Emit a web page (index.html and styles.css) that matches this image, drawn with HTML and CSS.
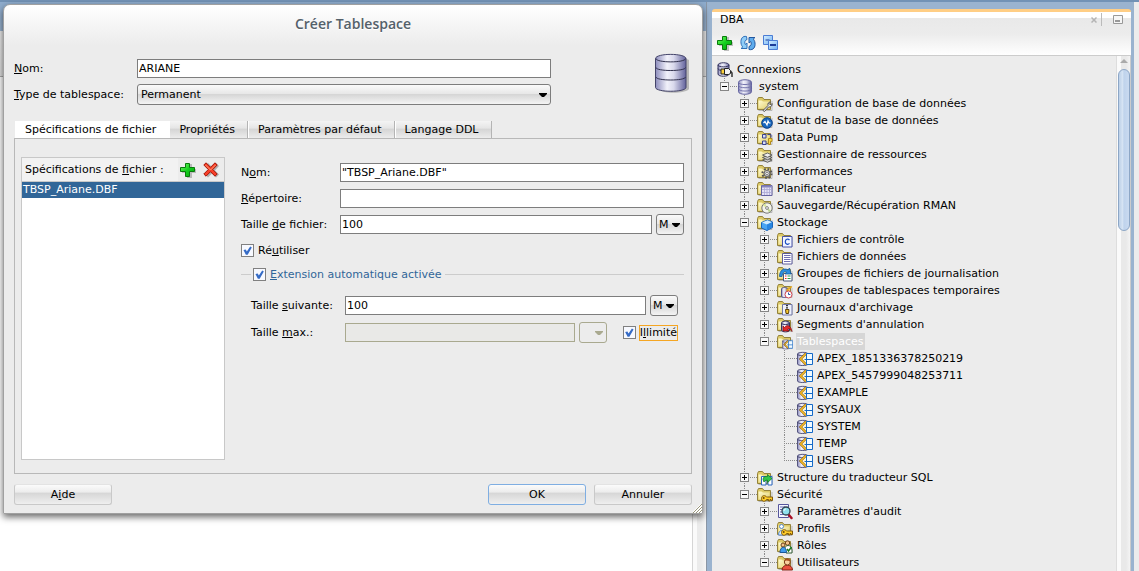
FILE: index.html
```html
<!DOCTYPE html>
<html lang="fr">
<head>
<meta charset="utf-8">
<title>Créer Tablespace</title>
<link rel="stylesheet" href="styles.css">
</head>
<body>
<svg class="defs" width="0" height="0" aria-hidden="true">
  <defs>
    <linearGradient id="cyl"><stop offset="0" stop-color="#8d8dbd"/><stop offset=".38" stop-color="#f1f1fa"/><stop offset=".6" stop-color="#d9d9ec"/><stop offset="1" stop-color="#62629c"/></linearGradient>
    <linearGradient id="fold" x2="1" y2="1"><stop offset="0" stop-color="#fffbd0"/><stop offset="1" stop-color="#e2d070"/></linearGradient>
    <linearGradient id="blue" y2="1"><stop offset="0" stop-color="#d6eeff"/><stop offset="1" stop-color="#6fb2f4"/></linearGradient>
    <linearGradient id="grn" x2="1" y2="1"><stop offset="0" stop-color="#7dff6a"/><stop offset=".5" stop-color="#12cf1d"/><stop offset="1" stop-color="#08a00f"/></linearGradient>

    <symbol id="plus" viewBox="0 0 16 16"><path d="M7 2h5v5h4v4h-4v5H7v-5H2V7h5z" fill="#999" opacity=".6"/><path d="M5.500 1.500h4v4h5v4h-5v5h-4v-5h-5v-4h5z" fill="url(#grn)" stroke="#087a0c"/></symbol>
    <symbol id="cross" viewBox="0 0 16 16"><path d="M2 4l3-3 4 4 4-4 3 3-4 4.500 4 4-3 3-4-4-4 4-3-3 4-4z" fill="#888" opacity=".6"/><path d="M.8 3L3 .8l4.500 4.500L12 .8 14.200 3 9.800 7.500l4.400 4.500-2.200 2.200L7.500 9.700 3 14.200.8 12l4.500-4.500z" fill="#f8402a" stroke="#a51608"/><path d="M2.500 3l5 5 5-5" fill="none" stroke="#ff9a72"/></symbol>
    <symbol id="refresh" viewBox="0 0 16 16"><path d="M6.500 1.500C2.500 .5 .5 4 1 8c.2 2 1 3.200 1.800 4L1 13.500h6V8L5.300 9.500C4.200 7.500 4.800 5 7 4.500z" fill="#8fcdf8" stroke="#2f6fb8"/><path d="M9 14.500c4.500 1 6.500-2.500 6-6.500-.2-2-1-3.200-1.800-4L15 2.500H9V8l1.700-1.500c1.100 2 .5 4.500-1.700 5z" fill="#5eaced" stroke="#2358a0"/></symbol>
    <symbol id="collapse" viewBox="0 0 16 16"><path d="M.5.500h9v9h-9z" fill="url(#blue)" stroke="#4a7cd4"/><path d="M2.500 5h4" stroke="#1c3c98"/><path d="M5.500 5.500h9v9h-9z" fill="url(#blue)" stroke="#4a7cd4"/><path d="M7 10h6" stroke="#1c3c98" stroke-width="2"/></symbol>

    <symbol id="db" viewBox="0 0 16 16"><path d="M1.500 3.300C1.500-.1 14.500-.1 14.500 3.300v9.400c0 3.400-13 3.400-13 0z" fill="url(#cyl)" stroke="#6464a0"/><path d="M1.500 3.300c0 3 13 3 13 0M1.500 6.500c0 3 13 3 13 0M1.500 9.800c0 3 13 3 13 0" fill="none" stroke="#7575ad"/></symbol>
    <symbol id="dbbig" viewBox="0 0 36 42"><path d="M4 7c4-3 27-3 31 0v29c-4 5-27 5-31 0z" fill="#777" opacity=".45"/><path d="M1.500 5.500C2 0 31.500 0 32 5.500v29c-.5 5-30 5-30.500 0z" fill="url(#cyl)" stroke="#44446a"/><path d="M2 5.500c0 4.500 29.500 4.500 29.500 0M2 14.500c0 4 29.500 4 29.500 0M2 24c0 4 29.500 4 29.500 0" fill="none" stroke="#33334f"/></symbol>
    <symbol id="conn" viewBox="0 0 16 16"><path d="M1 3C1 0 12 0 12 3v9c0 3-11 3-11 0z" fill="url(#cyl)" stroke="#34345e"/><path d="M1 3c0 2.500 11 2.500 11 0M1 6.500C1 8 4 8.500 5 8.500" fill="none" stroke="#34345e"/><path d="M4 7h5v5H4z" fill="#ffd23c" stroke="#222"/><path d="M7.500 6.500h4l2 2v3l-2 1h-4z" fill="#f4f4f4" stroke="#222"/><path d="M13.500 9l1.500 2v4" fill="none" stroke="#333" stroke-width="1.500"/></symbol>
    <symbol id="folder" viewBox="0 0 16 16"><path d="M1.500 14.500h13.500V5" fill="none" stroke="#999" opacity=".6"/><path d="M.5 13.500v-10l1-2h4l1.500 2h6.500v10z" fill="#dcc966" stroke="#94823a"/><path d="M1.500 12.500v-8h3l1.500 1h6.500v7z" fill="url(#fold)"/></symbol>
    <symbol id="o-wrench" viewBox="0 0 16 16"><path d="M6 14.500l5-5c-.5-2 .5-3.500 2.500-3.500L12 7.500l1.500 1.500L15 7.500c.5 2-1 4-3.500 3.500l-4 4.500z" fill="#eee" stroke="#555"/></symbol>
    <symbol id="o-stat" viewBox="0 0 16 16"><circle cx="10" cy="10" r="5.300" fill="#1767bd" stroke="#0b3f86"/><path d="M6.500 10l1.500-1.500 2 3.500 1-4 1 2h1.500" fill="none" stroke="#fff" stroke-width="1.200"/></symbol>
    <symbol id="o-pump" viewBox="0 0 16 16"><path d="M5.500 4.500h3.500v3.500H5.500zM5.500 11h3.500v3.500H5.500z" fill="#d7dcf5" stroke="#39418e"/><path d="M10.500 4.500H14v3M10.500 13.500h2v-3" fill="none" stroke="#39418e"/><path d="M11.500 8.500H15v3h-1.500v3h-2z" fill="#f7d64a" stroke="#b18a1d"/></symbol>
    <symbol id="o-stack" viewBox="0 0 16 16"><g fill="#ccc" stroke="#444" stroke-width=".8"><path d="M5.500 13l5-2 4.500 2-4.500 2.300z"/><path d="M5.500 10.500l5-2 4.500 2-4.500 2.300z"/><path d="M5.500 8l5-2 4.500 2-4.500 2.300z" fill="#eee"/></g></symbol>
    <symbol id="o-gear" viewBox="0 0 16 16"><circle cx="10" cy="9.500" r="4.600" fill="none" stroke="#555" stroke-width="2" stroke-dasharray="1.800 1.810"/><circle cx="10" cy="9.500" r="3" fill="#ddd" stroke="#666" stroke-width="1.200"/><circle cx="10" cy="9.500" r="1.300" fill="#fff" stroke="#555" stroke-width=".7"/></symbol>
    <symbol id="o-grid" viewBox="0 0 16 16"><path d="M4.500 4.500h10.500v10H4.500z" fill="#e4e2f6" stroke="#6563a0"/><path d="M5 5.500h9.500" stroke="#8583bd" stroke-width="2"/><path d="M5 8.500h9.500M5 11.500h9.500M7.500 6v8M10 6v8M12.500 6v8" stroke="#aaa8d4" stroke-width=".8"/></symbol>
    <symbol id="o-cd" viewBox="0 0 16 16"><circle cx="10" cy="10" r="5.200" fill="#f3f3ea" stroke="#777"/><path d="M10 10L6 7.500A5 5 0 0 1 8.500 5.500z" fill="#d9e59a"/><path d="M10 10l4 2.500-2 2z" fill="#b9d28e"/><circle cx="10" cy="10" r="1.400" fill="#fff" stroke="#666" stroke-width=".8"/></symbol>
    <symbol id="o-cube" viewBox="0 0 16 16"><path d="M4.500 7.500l6-2.500 5 2v5.500L10 15.500 4.500 13z" fill="#49a5f3" stroke="#1865bd"/><path d="M5 7.500l5.500-2.300 4.500 2L10 9.500z" fill="#d0ecff"/><path d="M10 9.500v5.500l5-2.800V7.300z" fill="#2a86e0"/></symbol>
    <symbol id="o-c" viewBox="0 0 16 16"><path d="M5.500 4.500h9.500v10.500H5.500z" fill="#f1f5ff" stroke="#4853a8"/><path d="M12.500 8c-1.500-1.700-4.200-.8-4.200 1.700s2.700 3.400 4.200 1.700" fill="none" stroke="#1d51c4" stroke-width="1.200"/></symbol>
    <symbol id="o-doc" viewBox="0 0 16 16"><path d="M5.500 4.500h9.500v10.500H5.500z" fill="#fff" stroke="#5c5c9c"/><path d="M7 6.500h6.500M7 8.500h6.500M7 10.500h6.500M7 12.500h6.500" stroke="#7070b4"/></symbol>
    <symbol id="o-redo" viewBox="0 0 16 16"><path d="M6.500 7.500h8.500V15H6.500z" fill="#fff" stroke="#4b5a79"/><path d="M8 10h1.500M8 12.500h1.500" stroke="#e22"/><path d="M10.500 10h3M10.500 12.500h3" stroke="#29a04b"/><path d="M2.500 10.500C2.500 4 7 1.500 11 4l1.500-2 1.500 6H8l1.500-2C7 5 5.500 7 5 10.500z" fill="#2c8fe0" stroke="#155a9c" stroke-width=".8"/></symbol>
    <symbol id="o-temp" viewBox="0 0 16 16"><path d="M4.500 6c0-2 6-2 6 0v7c0 2-6 2-6 0z" fill="url(#cyl)" stroke="#50508a"/><path d="M15 3.500L10 7l3 2" fill="none" stroke="#e7a415" stroke-width="1.500"/><circle cx="11.500" cy="11.500" r="3.500" fill="#fff" stroke="#cf4450"/><path d="M11.500 9.500v2h1.800" fill="none" stroke="#2b55a8"/></symbol>
    <symbol id="o-zip" viewBox="0 0 16 16"><path d="M5.500 4.500h9.500v10.500H5.500z" fill="#edf0fc" stroke="#6f76a5"/><path d="M10 5v5" stroke="#333" stroke-width="2" stroke-dasharray="1 .7"/><path d="M8.500 9.500h3.500l-.5 4h-2.500z" fill="#f6c72c" stroke="#5f4309"/></symbol>
    <symbol id="o-undo" viewBox="0 0 16 16"><path d="M4.500 6c0-2.500 8-2.500 8 0v7c0 2.500-8 2.500-8 0z" fill="url(#cyl)" stroke="#34345e"/><path d="M4.500 6c0 2 8 2 8 0" fill="none" stroke="#34345e"/><path d="M6 9l1.500 1.500C10 7 14 8.500 15 14.500c-1.500-3-3-3.500-4.500-2L12 14H6z" fill="#e02a2a" stroke="#8d0909" stroke-width=".7"/></symbol>
    <symbol id="ts" viewBox="0 0 16 16"><path d="M.5 3C.5.800 11 .8 11 3v10c0 2-10.500 2-10.500 0z" fill="url(#cyl)" stroke="#55557f"/><path d="M.5 3c0 1.500 5 2 7 1.500" fill="none" stroke="#45456f"/><path d="M9.500 2.500L4 8l5.500 5.500z" fill="#fff4cf"/><path d="M9 2.500L3.500 8 9 13.500" fill="none" stroke="#6e4500" stroke-width="2.200"/><path d="M9 2.500L3.500 8 9 13.500" fill="none" stroke="#ffc425" stroke-width="1.300"/><path d="M9.500 2.500h6v11h-6z" fill="#f1faff" stroke="#1469c7"/><path d="M9.500 8.500h6" stroke="#1469c7"/><path d="M7.500 8.500h2" stroke="#1469c7"/></symbol>
    <symbol id="o-trans" viewBox="0 0 16 16"><path d="M4.500 6.500h4.500v8.500H4.500zM11 6.500h4v8.500h-4z" fill="#fff" stroke="#2a67c0"/><path d="M6 9.500c0-2.500 2-3.500 4.500-3V4.500l4.500 4-4.500 4v-2.300C8.500 10 7.500 11 7 12z" fill="#31c54a" stroke="#0e7a23" stroke-width=".8"/></symbol>
    <symbol id="o-key" viewBox="0 0 16 16"><path d="M10.500 10H15.500v3.500H14V12.500h-1V14h-1.500v-1.500H9.500c-1 2.500-5 2.500-5-1s4-3.500 5-1.500z" fill="#ffcd2b" stroke="#80590b"/><circle cx="6.700" cy="11" r="1" fill="#6d4b0a"/></symbol>
    <symbol id="audit" viewBox="0 0 16 16"><path d="M1.500.500h10v13h-10z" fill="#f4f5ff" stroke="#56569c"/><path d="M3 3h5M3 5.500h3M3 8h3M3 10.500h5" stroke="#6666b0"/><path d="M11.500 10.500l3 3.500" stroke="#a80f24" stroke-width="2.500" stroke-linecap="round"/><circle cx="9" cy="7" r="4" fill="#8fe0ed" stroke="#31424f" stroke-width="1.300"/><path d="M7 7c0-1.500 1-2 2-2" fill="none" stroke="#fff"/></symbol>
    <symbol id="o-prof" viewBox="0 0 16 16"><circle cx="4.500" cy="5.500" r="2" fill="#fff" stroke="#5588c8"/><path d="M1.500 14c0-6 6-6 6 0z" fill="#dcecff" stroke="#5588c8"/></symbol>
    <symbol id="o-roles" viewBox="0 0 16 16"><circle cx="10.500" cy="5" r="2.200" fill="#f6c28b" stroke="#6c431c"/><path d="M7.500 12c0-6 7-6 7.500 0v3h-6z" fill="#fff" stroke="#315a35"/><circle cx="6" cy="7" r="2" fill="#f6c28b" stroke="#6c431c"/><path d="M3 14.500c0-7 6.500-7 6.500 0z" fill="#3f9bec" stroke="#1b5796"/><path d="M10 11l1.500 2 3-4" fill="none" stroke="#157a20" stroke-width="1.400"/></symbol>
    <symbol id="o-user" viewBox="0 0 16 16"><path d="M5 15c0-6.500 10.500-6.500 10.500 0z" fill="#e8523f" stroke="#8d1d12"/><circle cx="10.300" cy="7" r="3" fill="#f9cf9e" stroke="#7c3a18"/><path d="M7.500 6c.5-3.500 5.500-3.500 5.700 0-2 .2-4-1.500-5.700 0z" fill="#a6501c"/></symbol>
    <symbol id="arrow" viewBox="0 0 8 4"><path d="M0 0h8v1L5 4H3L0 1z" fill="currentColor"/></symbol>
  </defs>
</svg>

<div class="desktop">
  <main class="editor">
    <div class="editor-tabs"></div>
    <div class="editor-toolbar"></div>
    <div class="editor-body"><div class="editor-page"></div><div class="track"></div></div>

    <form class="dialog" role="dialog" aria-labelledby="dlg-title">
      <h1 class="dialog-title" id="dlg-title">Créer Tablespace</h1>
      <div class="head">
        <div class="head-fields">
          <label for="name"><u>N</u>om:</label>
          <input class="field" id="name" type="text" value="ARIANE">
          <label for="type"><u>T</u>ype de tablespace:</label>
          <span class="combo"><select id="type"><option>Permanent</option></select><svg class="arrow"><use href="#arrow"/></svg></span>
        </div>
        <svg class="head-icon" aria-hidden="true"><use href="#dbbig"/></svg>
      </div>

      <div class="tabs" role="tablist">
        <button type="button" class="tab active" role="tab" aria-selected="true">Spécifications de fichier</button>
        <button type="button" class="tab" role="tab">Propriétés</button>
        <button type="button" class="tab" role="tab">Paramètres par défaut</button>
        <button type="button" class="tab" role="tab">Langage DDL</button>
      </div>

      <section class="pane">
        <div class="files">
          <div class="files-head">
            <span class="files-label">Spécifications de <u>f</u>ichier :</span>
            <button type="button" class="tool" aria-label="Ajouter"><svg class="icon"><use href="#plus"/></svg></button>
            <button type="button" class="tool" aria-label="Supprimer"><svg class="icon"><use href="#cross"/></svg></button>
          </div>
          <ul class="files-list"><li class="picked">TBSP_Ariane.DBF</li></ul>
        </div>

        <div class="spec">
          <div class="row"><label for="fname">N<u>o</u>m:</label><input class="field" id="fname" type="text" value="&quot;TBSP_Ariane.DBF&quot;"></div>
          <div class="row"><label for="dir"><u>R</u>épertoire:</label><input class="field" id="dir" type="text"></div>
          <div class="row"><label for="size">Taille <u>d</u>e fichier:</label><input class="field" id="size" type="text" value="100"><span class="combo unit"><select aria-label="Unité de taille"><option>M</option></select><svg class="arrow"><use href="#arrow"/></svg></span></div>
          <div class="row"><label class="check"><input type="checkbox" checked><span>Ré<u>u</u>tiliser</span></label></div>
          <fieldset class="auto">
            <legend><label class="check"><input type="checkbox" checked><span><u>E</u>xtension automatique activée</span></label></legend>
            <div class="row"><label for="next">Taille <u>s</u>uivante:</label><input class="field" id="next" type="text" value="100"><span class="combo unit"><select aria-label="Unité suivante"><option>M</option></select><svg class="arrow"><use href="#arrow"/></svg></span></div>
            <div class="row"><label for="max">Taille <u>m</u>ax.:</label><input class="field" id="max" type="text" disabled><span class="combo unit off"><select aria-label="Unité maximale" disabled><option></option></select><svg class="arrow"><use href="#arrow"/></svg></span><label class="check unlimited"><input type="checkbox" checked><span class="focus">I<u>l</u>limité</span></label></div>
          </fieldset>
        </div>
      </section>

      <footer class="actions">
        <button type="button" class="btn">A<u>i</u>de</button>
        <button type="button" class="btn primary">OK</button>
        <button type="button" class="btn">Annuler</button>
      </footer>
      <svg class="grip" viewBox="0 0 9 9" aria-hidden="true"><path d="M0 9L9 0M3 9l6-6M6 9l3-3" stroke="#fff" stroke-width="2"/><path d="M0 9L9 0M3 9l6-6M6 9l3-3" stroke="#99967c"/></svg>
    </form>
  </main>

  <aside class="dba">
    <header class="dba-head">
      <div class="dba-title"><h2>DBA</h2><button class="mini close" aria-label="Fermer"><svg viewBox="0 0 6 6"><path d="M.5.500l5 5M5.500.500l-5 5" stroke="#b4b4b4" stroke-width="1.500"/></svg></button><i class="sep"></i><button class="mini min" aria-label="Réduire"><svg viewBox="0 0 10 9"><path d="M.5.500h9v8h-9z" fill="#f6f6f6" stroke="#999"/><path d="M2 6h5" stroke="#999" stroke-width="2"/></svg></button></div>
      <div class="dba-tools">
        <button class="tool" aria-label="Ajouter"><svg class="icon"><use href="#plus"/></svg></button>
        <button class="tool" aria-label="Actualiser"><svg class="icon"><use href="#refresh"/></svg></button>
        <button class="tool" aria-label="Tout réduire"><svg class="icon"><use href="#collapse"/></svg></button>
      </div>
    </header>
    <div class="dba-body">
      <div class="tree">
        <div class="node root"><svg class="icon"><use href="#conn"/></svg><span>Connexions</span></div>
        <ul class="top">
          <li><div class="node system"><button class="exp open" aria-label="Réduire"></button><svg class="icon"><use href="#db"/></svg><span>system</span></div>
            <ul>
              <li><div class="node"><button class="exp" aria-label="Développer"></button><svg class="icon"><use href="#folder"/><use href="#o-wrench"/></svg><span>Configuration de base de données</span></div></li>
              <li><div class="node"><button class="exp" aria-label="Développer"></button><svg class="icon"><use href="#folder"/><use href="#o-stat"/></svg><span>Statut de la base de données</span></div></li>
              <li><div class="node"><button class="exp" aria-label="Développer"></button><svg class="icon"><use href="#folder"/><use href="#o-pump"/></svg><span>Data Pump</span></div></li>
              <li><div class="node"><button class="exp" aria-label="Développer"></button><svg class="icon"><use href="#folder"/><use href="#o-stack"/></svg><span>Gestionnaire de ressources</span></div></li>
              <li><div class="node"><button class="exp" aria-label="Développer"></button><svg class="icon"><use href="#folder"/><use href="#o-gear"/></svg><span>Performances</span></div></li>
              <li><div class="node"><button class="exp" aria-label="Développer"></button><svg class="icon"><use href="#folder"/><use href="#o-grid"/></svg><span>Planificateur</span></div></li>
              <li><div class="node"><button class="exp" aria-label="Développer"></button><svg class="icon"><use href="#folder"/><use href="#o-cd"/></svg><span>Sauvegarde/Récupération RMAN</span></div></li>
              <li><div class="node"><button class="exp open" aria-label="Réduire"></button><svg class="icon"><use href="#folder"/><use href="#o-cube"/></svg><span>Stockage</span></div>
                <ul>
                  <li><div class="node"><button class="exp" aria-label="Développer"></button><svg class="icon"><use href="#folder"/><use href="#o-c"/></svg><span>Fichiers de contrôle</span></div></li>
                  <li><div class="node"><button class="exp" aria-label="Développer"></button><svg class="icon"><use href="#folder"/><use href="#o-doc"/></svg><span>Fichiers de données</span></div></li>
                  <li><div class="node"><button class="exp" aria-label="Développer"></button><svg class="icon"><use href="#folder"/><use href="#o-redo"/></svg><span>Groupes de fichiers de journalisation</span></div></li>
                  <li><div class="node"><button class="exp" aria-label="Développer"></button><svg class="icon"><use href="#folder"/><use href="#o-temp"/></svg><span>Groupes de tablespaces temporaires</span></div></li>
                  <li><div class="node"><button class="exp" aria-label="Développer"></button><svg class="icon"><use href="#folder"/><use href="#o-zip"/></svg><span>Journaux d'archivage</span></div></li>
                  <li><div class="node"><button class="exp" aria-label="Développer"></button><svg class="icon"><use href="#folder"/><use href="#o-undo"/></svg><span>Segments d'annulation</span></div></li>
                  <li><div class="node"><button class="exp open" aria-label="Réduire"></button><svg class="icon"><use href="#folder"/><use href="#ts" x="5" y="5" width="11" height="11"/></svg><span class="selected">Tablespaces</span></div>
                    <ul>
                      <li><div class="node leaf"><svg class="icon"><use href="#ts"/></svg><span>APEX_1851336378250219</span></div></li>
                      <li><div class="node leaf"><svg class="icon"><use href="#ts"/></svg><span>APEX_5457999048253711</span></div></li>
                      <li><div class="node leaf"><svg class="icon"><use href="#ts"/></svg><span>EXAMPLE</span></div></li>
                      <li><div class="node leaf"><svg class="icon"><use href="#ts"/></svg><span>SYSAUX</span></div></li>
                      <li><div class="node leaf"><svg class="icon"><use href="#ts"/></svg><span>SYSTEM</span></div></li>
                      <li><div class="node leaf"><svg class="icon"><use href="#ts"/></svg><span>TEMP</span></div></li>
                      <li><div class="node leaf"><svg class="icon"><use href="#ts"/></svg><span>USERS</span></div></li>
                    </ul>
                  </li>
                </ul>
              </li>
              <li><div class="node"><button class="exp" aria-label="Développer"></button><svg class="icon"><use href="#folder"/><use href="#o-trans"/></svg><span>Structure du traducteur SQL</span></div></li>
              <li><div class="node"><button class="exp open" aria-label="Réduire"></button><svg class="icon"><use href="#folder"/><use href="#o-key"/></svg><span>Sécurité</span></div>
                <ul>
                  <li><div class="node"><button class="exp" aria-label="Développer"></button><svg class="icon"><use href="#audit"/></svg><span>Paramètres d'audit</span></div></li>
                  <li><div class="node"><button class="exp" aria-label="Développer"></button><svg class="icon"><use href="#folder"/><use href="#o-prof"/><use href="#o-key"/></svg><span>Profils</span></div></li>
                  <li><div class="node"><button class="exp" aria-label="Développer"></button><svg class="icon"><use href="#folder"/><use href="#o-roles"/></svg><span>Rôles</span></div></li>
                  <li><div class="node"><button class="exp open" aria-label="Réduire"></button><svg class="icon"><use href="#folder"/><use href="#o-user"/></svg><span>Utilisateurs</span></div></li>
                </ul>
              </li>
            </ul>
          </li>
        </ul>
      </div>
      <div class="scroll"><svg class="up" viewBox="0 0 8 4"><path d="M4 0l4 4H0z" fill="#aaa"/></svg><div class="thumb"></div></div>
    </div>
  </aside>
  <div class="edge"></div>
</div>
</body>
</html>
```
FILE: styles.css
```css
* { box-sizing: border-box; }
body { margin: 0; background: #9ab3cf; color: #000; font: 11px/17px "DejaVu Sans", sans-serif; overflow: hidden; }
button, input, select { font: inherit; color: inherit; margin: 0; }
button { padding: 0; border: 0; background: none; }
ul { margin: 0; padding: 0; list-style: none; }
u { text-underline-offset: 1px; }
.defs { display: block; width: 0; height: 0; position: absolute; }
.icon { width: 16px; height: 16px; display: block; flex: none; }

.desktop { display: grid; grid-template-columns: minmax(0, 1fr) 422px 5px; height: 100vh; border-top: 2px solid #7292b5; }

/* Editor behind the dialog */
.editor { position: relative; display: flex; flex-direction: column; margin-right: 5px; border-right: 1px solid #8a96a5; min-width: 0; }
.editor-tabs { height: 29px; background: linear-gradient(#8eaccd, #9ab3cf); }
.editor-toolbar { height: 46px; background: linear-gradient(#ececec, #e0e0e0); border-bottom: 1px solid #aaa; }
.editor-body { flex: 1; display: flex; background: #fff; }
.editor-page { flex: 1; }
.track { width: 14px; border-left: 1px solid #d5d5d5; background: linear-gradient(90deg, #fafafa 0 4px, #ebebeb 4px 8px, #f6f6f6); }

/* Dialog */
.dialog { position: absolute; top: 2px; left: 3px; right: 3px; padding: 0 10px 8px; border: 1px solid #a0a0a0; border-radius: 7px 7px 0 0; background: linear-gradient(#fff, #ececec 40px); box-shadow: 0 3px 7px rgba(0, 0, 0, .6); }
.dialog-title { margin: 0; padding: 9px 0; text-align: center; font: 600 14px/20px "Open Sans", sans-serif; color: #54616a; text-shadow: 0 1px #fff; }
.head { display: flex; justify-content: space-between; padding-top: 16px; }
.head-fields { flex: 0 1 537px; display: grid; grid-template-columns: 119px 1fr; gap: 6px 4px; align-items: center; }
.head-fields label { white-space: nowrap; }
.head-icon { width: 36px; height: 42px; margin-right: 2px; margin-top: -6px; }

.field { height: 19px; padding: 0 1px; border: 1px solid #7d7d7d; border-radius: 0; background: #fff; min-width: 0; width: 100%; outline: 0; }
.field:disabled { border-color: #a9a98f; background: #e9e9e7; }
.combo { display: grid; align-items: center; }
.combo select { grid-area: 1 / 1; appearance: none; width: 100%; height: 21px; padding: 0 3px; border: 1px solid #7d7d7d; border-radius: 3px; background: linear-gradient(#fafafa, #e8e8e8 45%, #d6d6d6 50%, #f4f4f4); }
.combo .arrow { grid-area: 1 / 1; justify-self: end; width: 8px; height: 4px; margin-right: 4px; pointer-events: none; }
.unit { flex: 0 0 28px; }
.unit select { padding: 0 2px; }
.off { color: #a9a98f; }
.off select { border-color: #a9a98f; background: #ececec; opacity: 1; }

.tabs { display: flex; padding-top: 16px; padding-left: 1px; }
.tab { height: 17px; padding: 0 12px 0 9px; border-right: 1px solid #b4b4b4; border-left: 1px solid #fff; background: linear-gradient(#f4f4f4, #e6e6e6 40%, #d6d6d6 50%, #ececec); white-space: nowrap; }
.tab.active { background: #fff; border-color: #fff; }
.pane { display: flex; gap: 16px; min-height: 336px; padding: 18px 7px 13px 6px; border: 1px solid #b8b8b8; }
.files { flex: 0 0 204px; display: flex; flex-direction: column; border: 1px solid #c8c8c8; background: #fff; }
.files-head { display: flex; align-items: center; height: 24px; padding-left: 3px; border-bottom: 1px solid #c8c8c8; background: #f2f2f2; }
.files-label { flex: 1; white-space: nowrap; }
.files .tool { width: 23px; padding-left: 2px; height: 23px; background: #ececec; }
.files-list { line-height: 16px; }
.picked { padding-left: 1px; background: #316698; color: #fff; }

.spec { flex: 1; min-width: 0; padding-top: 5px; display: flex; flex-direction: column; gap: 5px; }
.row { display: flex; align-items: center; gap: 4px; min-height: 21px; }
.row > label:first-child:not(.check) { flex: 0 0 95px; white-space: nowrap; }
.check { display: flex; align-items: center; gap: 4px; white-space: nowrap; }
.check input { appearance: none; display: grid; place-items: center; width: 13px; height: 13px; border: 1px solid #808080; background: #f7f9ff; }
.check input:checked::before { content: ""; width: 9px; height: 9px; background: #356bc6; clip-path: polygon(5% 45%, 30% 38%, 43% 60%, 80% 5%, 98% 18%, 52% 98%, 32% 98%); }
.auto { margin: 0; padding: 12px 6px 0 10px; border: 0; border-top: 1px solid #ccc; min-width: 0; }
.auto legend { padding: 0 3px 0 2px; color: #316698; }
.auto .row { margin-bottom: 6px; }
.auto .row > label:first-child { flex-basis: 90px; }
.unlimited { padding-left: 12px; gap: 3px; }
.focus { height: 16px; line-height: 14px; border: 1px solid #f5a623; }

.actions { display: flex; gap: 8px; padding-top: 10px; }
.btn { width: 98px; height: 21px; border: 1px solid #c9c9c9; border-top-color: #e3e3e3; border-radius: 3px; background: linear-gradient(#fbfbfb, #ececec 38%, #d6d6d6 42%, #efefef); }
.btn:first-child { margin-right: auto; }
.btn.primary { border-color: #7faee2; }
.grip { position: absolute; right: 0; bottom: 0; width: 9px; height: 9px; }

/* DBA navigator */
.dba { display: flex; flex-direction: column; min-width: 0; min-height: 0; margin-top: 7px; margin-right: 3px; border-top: 3px solid #ffce85; border-radius: 3px 3px 0 0; background: #ececec; }
.dba-head { height: 44px; flex: none; border-bottom: 1px solid #ccc; background: linear-gradient(#fff 0 6px, #e9e9e9 6px, #ececec 22px, #fff); }
.dba-title { display: flex; align-items: center; padding: 0 8px; height: 15px; }
.dba-title h2 { flex: 1; margin: 0; font: inherit; }
.mini svg { display: block; }
.close svg { width: 6px; height: 6px; }
.min svg { width: 10px; height: 9px; }
.sep { width: 1px; height: 13px; margin: 0 11px 0 4px; background: #bbb; }
.dba-tools { display: flex; gap: 7px; padding: 8px 5px; }
.dba-body { flex: 1; display: flex; min-height: 0; }
.tree { flex: 1; min-width: 0; overflow: hidden; padding: 5px 0 0 5px; }
.top { padding-left: 3px; }
.top ul { padding-left: 20px; }
.top li { background: repeating-linear-gradient(#8c8c8c 0 1px, transparent 1px 2px) 4px 0 / 1px 100% no-repeat; }
.top li:last-child { background-size: 1px 9px; }
.node { display: flex; align-items: center; gap: 4px; height: 17px; white-space: nowrap; }
.top .node { background: repeating-linear-gradient(90deg, #8c8c8c 0 1px, transparent 1px 2px) 4px 8px / 13px 1px no-repeat; }
.system { gap: 6px; }
.leaf { padding-left: 17px; }
.exp { width: 9px; height: 9px; flex: none; margin-right: 4px; border: 1px solid #868686; background: linear-gradient(#000, #000) center / 5px 1px no-repeat, linear-gradient(#000, #000) center / 1px 5px no-repeat, #f8f8f8; }
.exp.open { background: linear-gradient(#000, #000) center / 5px 1px no-repeat, #f8f8f8; }
.system .exp { margin-right: 2px; }
.selected { margin-left: -1px; padding: 0 2px 0 1px; background: #d6d6d6; color: #fff; }
.scroll { width: 15px; display: flex; flex-direction: column; align-items: center; border-left: 1px solid #ddd; border-right: 1px solid #ccc; background: linear-gradient(90deg, #fafafa 0 4px, #e9e9e9 4px 9px, #f4f4f4); }
.up { width: 8px; height: 4px; margin: 3px 0 6px; }
.thumb { width: 12px; height: 162px; border-radius: 6px; border: 1px solid #8ca6c6; background: linear-gradient(90deg, #bcd0e8, #d5e3f3 35%, #bfd3ec 50%, #c9daf0); }
.edge { background: #ececec; }
```
